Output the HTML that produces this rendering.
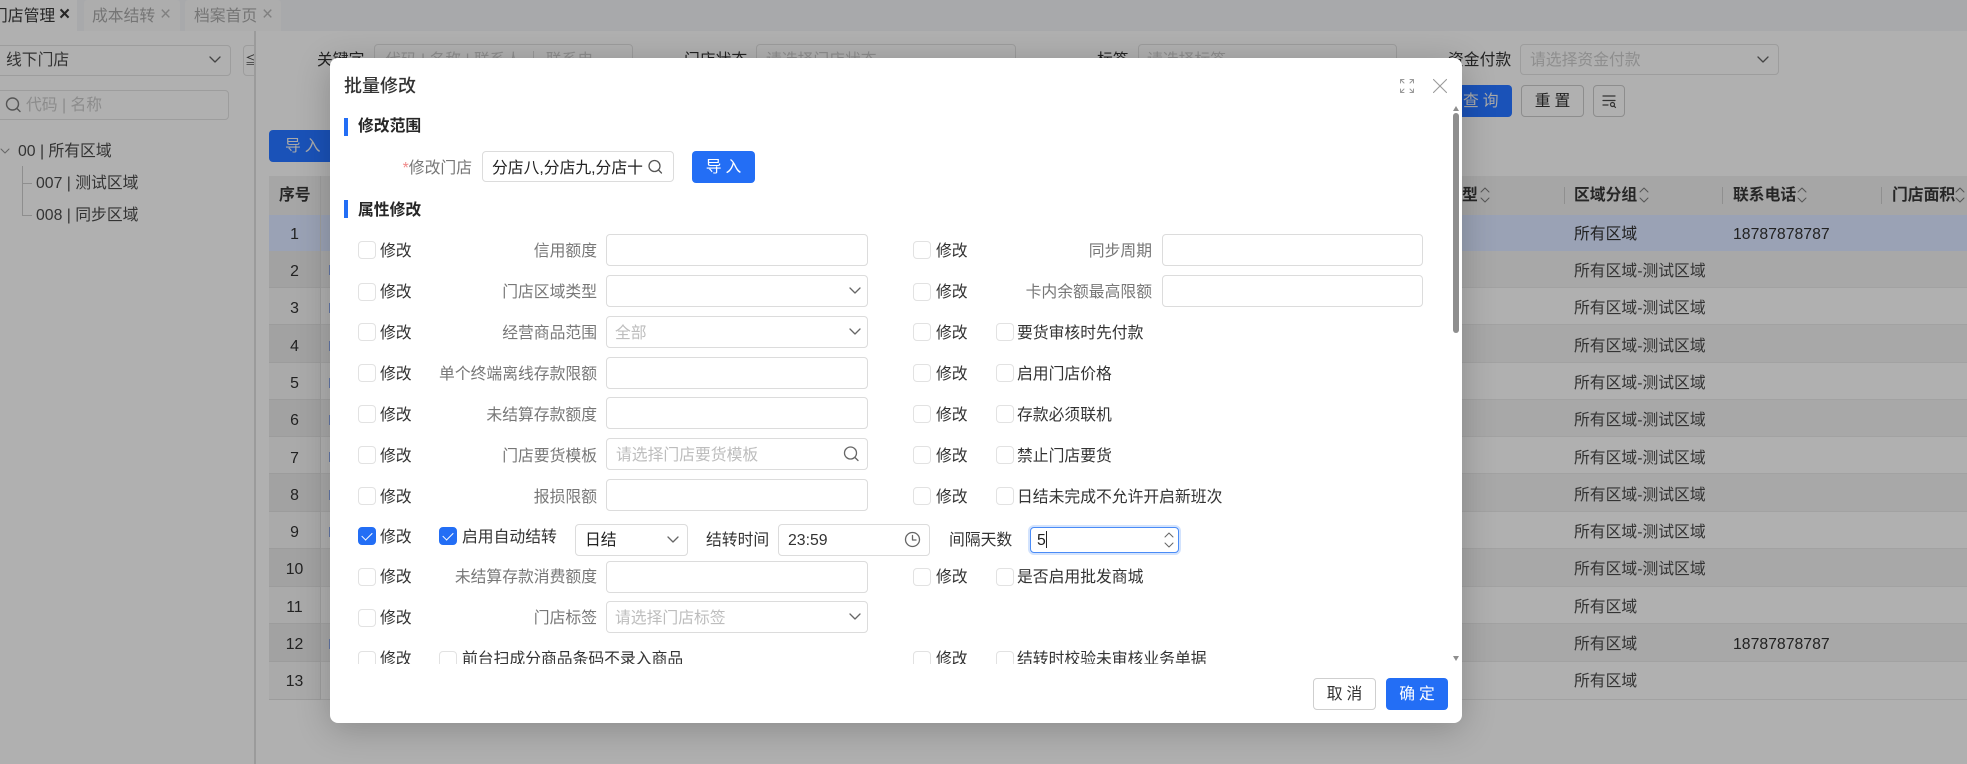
<!DOCTYPE html>
<html lang="zh-CN"><head><meta charset="utf-8"><title>批量修改</title>
<style>
*{box-sizing:border-box}
html,body{margin:0;padding:0;width:1967px;height:764px;overflow:hidden}
body{position:relative;background:#b0b0b0;font-family:"Liberation Sans","Noto Sans CJK SC",sans-serif;font-size:15.8px;color:#222}
.a,.t,.r,.rw,.in,.cb,.btn,svg{position:absolute}
.t{line-height:22px;height:22px;white-space:nowrap}
.r{line-height:22px;height:22px;white-space:nowrap;text-align:right}
.rw{left:269px;width:1698px;border-bottom:1px solid #a2a2a2}
.dk{background:#a8a8a8}
.in{background:#fff;border:1px solid #dcdcdc;border-radius:4px;height:32px}
.bgin{position:absolute;border:1px solid #9d9d9d;border-radius:4px;background:#b0b0b0}
.cb{width:18px;height:18px;border:1px solid #e2e2e2;border-radius:4px;background:#fff}
.cb.on{background:#236ef5;border-color:#236ef5}
.cb.on:after{content:"";position:absolute;left:5px;top:2px;width:5px;height:9px;border:solid #fff;border-width:0 1.6px 1.6px 0;transform:rotate(45deg)}
.btn{border-radius:4px;text-align:center;line-height:33px;height:32px;letter-spacing:4px;text-indent:4px}
.g{color:#777}.d{color:#333}.p{color:#bdbdbd}.h{font-weight:700;color:#262626}
.bd .d,.bd .g,.bd .p{transform:translateY(1px)}
.bd .n{transform:none}
.f{fill:none;stroke-linecap:round;stroke-linejoin:round}
.m{position:absolute;left:330px;top:58px;width:1132px;height:665px;background:#fff;border-radius:8px;box-shadow:0 6px 34px rgba(0,0,0,.22);overflow:hidden}
.bd{position:absolute;left:0;top:0;width:1120px;height:606px;overflow:hidden}
.sep{position:absolute;top:187px;height:17px;width:1px;background:#8f8f8f}
.pk{position:absolute;left:329px;width:2px;height:10px;background:#6478a8}
.x{font-size:19px}
</style></head><body>

<!-- tab bar -->
<div class="a" style="left:0;top:0;width:1967px;height:31px;background:#a8a9ab"></div>
<div class="a" style="left:0;top:0;width:77px;height:31px;background:#b0b0b0"></div>
<div class="t" style="left:-8px;top:6px;color:#262626">门店管理</div>
<div class="t x" style="left:59px;top:4px;color:#262626;font-weight:700">×</div>
<div class="a" style="left:84px;top:0;width:96px;height:31px;background:#adadad;border-radius:3px 3px 0 0"></div>
<div class="t" style="left:92px;top:6px;color:#757575">成本结转</div>
<div class="t x" style="left:160px;top:4px;color:#808080">×</div>
<div class="a" style="left:185px;top:0;width:96px;height:31px;background:#adadad;border-radius:3px 3px 0 0"></div>
<div class="t" style="left:194px;top:6px;color:#757575">档案首页</div>
<div class="t x" style="left:262px;top:4px;color:#808080">×</div>

<!-- left panel -->
<div class="bgin" style="left:-4px;top:45px;width:235px;height:31px"></div>
<div class="t d" style="left:6px;top:50px">线下门店</div>
<svg class="f" style="left:208px;top:55px" width="14" height="10" viewBox="0 0 14 10"><path d="M2 2l5 5 5-5" stroke="#444" stroke-width="1.3"/></svg>
<div class="bgin" style="left:243px;top:45px;width:20px;height:31px;border-radius:4px 0 0 4px"></div>
<div class="t" style="left:245px;top:49px;font-size:12px;color:#333">≦</div>
<div class="a" style="left:254px;top:31px;width:2px;height:733px;background:#9b9b9b"></div>
<div class="a" style="left:256px;top:45px;width:20px;height:31px;background:#b0b0b0"></div>
<div class="bgin" style="left:-4px;top:90px;width:233px;height:30px"></div>
<svg class="f" style="left:4px;top:96px" width="18" height="18" viewBox="0 0 18 18"><circle cx="8.5" cy="8" r="6" stroke="#555" stroke-width="1.4"/><path d="M13 12.5l3 3" stroke="#555" stroke-width="1.4"/></svg>
<div class="t" style="left:26px;top:95px;color:#8c8c8c">代码 | 名称</div>
<svg class="f" style="left:0;top:146px" width="10" height="10" viewBox="0 0 10 10"><path d="M1 3l4 4 4-4" stroke="#666" stroke-width="1"/></svg>
<div class="t d" style="left:18px;top:141px">00 | 所有区域</div>
<div class="a" style="left:22px;top:166px;width:1px;height:49px;background:#8e8e8e"></div>
<div class="a" style="left:22px;top:183px;width:10px;height:1px;background:#8e8e8e"></div>
<div class="a" style="left:22px;top:215px;width:10px;height:1px;background:#8e8e8e"></div>
<div class="t d" style="left:36px;top:173px">007 | 测试区域</div>
<div class="t d" style="left:36px;top:205px">008 | 同步区域</div>

<!-- filters -->
<div class="t" style="left:317px;top:50px;color:#222">关键字</div>
<div class="bgin" style="left:374px;top:44px;width:259px;height:31px"></div>
<div class="t" style="left:385px;top:50px;color:#8e8e8e">代码 | 名称 | 联系人 ｜ 联系电</div>
<div class="t" style="left:684px;top:50px;color:#222">门店状态</div>
<div class="bgin" style="left:756px;top:44px;width:260px;height:31px"></div>
<div class="t" style="left:766px;top:50px;color:#8e8e8e">请选择门店状态</div>
<div class="t" style="left:1097px;top:50px;color:#222">标签</div>
<div class="bgin" style="left:1138px;top:44px;width:259px;height:31px"></div>
<div class="t" style="left:1147px;top:50px;color:#8e8e8e">请选择标签</div>
<div class="t" style="left:1448px;top:50px;color:#222">资金付款</div>
<div class="bgin" style="left:1520px;top:44px;width:259px;height:31px"></div>
<div class="t" style="left:1530px;top:50px;color:#8e8e8e">请选择资金付款</div>
<svg class="f" style="left:1756px;top:55px" width="14" height="10" viewBox="0 0 14 10"><path d="M2 2l5 5 5-5" stroke="#444" stroke-width="1.3"/></svg>
<div class="btn" style="left:1440px;top:85px;width:72px;background:#1a52b8;color:#a9a9a9;text-align:left;text-indent:0;padding-left:23px;line-height:34px">查询</div>
<div class="btn" style="left:1521px;top:85px;width:63px;border:1px solid #8d8d8d;color:#222;line-height:32px">重置</div>
<div class="btn" style="left:1593px;top:85px;width:32px;border:1px solid #8d8d8d"></div>
<svg class="f" style="left:1601px;top:93px" width="16" height="16" viewBox="0 0 16 16"><path d="M2 3h12M2 7.500h12M2 12h5" stroke="#333" stroke-width="1.200"/><circle cx="11.500" cy="11.500" r="2" stroke="#333" stroke-width="1.200"/><path d="M13 13l1.500 1.500" stroke="#333" stroke-width="1.200"/></svg>
<div class="btn" style="left:269px;top:130px;width:70px;background:#1a52b8;color:#a9a9a9;text-align:left;text-indent:0;padding-left:16px;line-height:34px">导入</div>

<!-- table -->
<div class="a" style="left:269px;top:176px;width:1698px;height:39px;background:#a6a6a6"></div>
<div class="t h" style="left:279px;top:185px">序号</div>
<div class="rw" style="top:215px;height:36px;background:#9aa2b5;border:0"></div>
<div class="rw dk" style="top:251px;height:37px"></div>
<div class="rw" style="top:288px;height:37px"></div>
<div class="rw dk" style="top:325px;height:38px"></div>
<div class="rw" style="top:363px;height:37px"></div>
<div class="rw dk" style="top:400px;height:37px"></div>
<div class="rw" style="top:437px;height:37px"></div>
<div class="rw dk" style="top:474px;height:38px"></div>
<div class="rw" style="top:512px;height:37px"></div>
<div class="rw dk" style="top:549px;height:38px"></div>
<div class="rw" style="top:587px;height:37px"></div>
<div class="rw dk" style="top:624px;height:38px"></div>
<div class="rw" style="top:662px;height:38px"></div>
<div class="a" style="left:269px;top:251px;width:51px;height:449px;background:rgba(0,0,0,.03)"></div>
<div class="a" style="left:320px;top:176px;width:1px;height:524px;background:#9d9d9d"></div>
<div class="pk" style="top:265px"></div><div class="pk" style="top:303px"></div><div class="pk" style="top:341px"></div><div class="pk" style="top:378px"></div><div class="pk" style="top:415px"></div><div class="pk" style="top:452px"></div><div class="pk" style="top:490px"></div><div class="pk" style="top:527px"></div><div class="pk" style="top:639px"></div>

<div class="t" style="left:269px;width:51px;text-align:center;top:224px">1</div>
<div class="t" style="left:269px;width:51px;text-align:center;top:261px">2</div>
<div class="t" style="left:269px;width:51px;text-align:center;top:298px">3</div>
<div class="t" style="left:269px;width:51px;text-align:center;top:336px">4</div>
<div class="t" style="left:269px;width:51px;text-align:center;top:373px">5</div>
<div class="t" style="left:269px;width:51px;text-align:center;top:410px">6</div>
<div class="t" style="left:269px;width:51px;text-align:center;top:448px">7</div>
<div class="t" style="left:269px;width:51px;text-align:center;top:485px">8</div>
<div class="t" style="left:269px;width:51px;text-align:center;top:522px">9</div>
<div class="t" style="left:269px;width:51px;text-align:center;top:559px">10</div>
<div class="t" style="left:269px;width:51px;text-align:center;top:597px">11</div>
<div class="t" style="left:269px;width:51px;text-align:center;top:634px">12</div>
<div class="t" style="left:269px;width:51px;text-align:center;top:671px">13</div>

<div class="t h" style="left:1462px;top:185px">型</div>
<div class="sep" style="left:1564px"></div>
<div class="t h" style="left:1574px;top:185px">区域分组</div>
<div class="sep" style="left:1722px"></div>
<div class="t h" style="left:1733px;top:185px">联系电话</div>
<div class="sep" style="left:1881px"></div>
<div class="t h" style="left:1892px;top:185px">门店面积</div>
<svg class="f" style="left:1480px;top:186px" width="10" height="18" viewBox="0 0 10 18"><path d="M1 6l4-4 4 4M1 12l4 4 4-4" stroke="#555" stroke-width="1"/></svg>
<svg class="f" style="left:1639px;top:186px" width="10" height="18" viewBox="0 0 10 18"><path d="M1 6l4-4 4 4M1 12l4 4 4-4" stroke="#555" stroke-width="1"/></svg>
<svg class="f" style="left:1797px;top:186px" width="10" height="18" viewBox="0 0 10 18"><path d="M1 6l4-4 4 4M1 12l4 4 4-4" stroke="#555" stroke-width="1"/></svg>
<svg class="f" style="left:1955px;top:186px" width="10" height="18" viewBox="0 0 10 18"><path d="M1 6l4-4 4 4M1 12l4 4 4-4" stroke="#555" stroke-width="1"/></svg>

<div class="t" style="left:1574px;top:224px">所有区域</div>
<div class="t" style="left:1733px;top:224px">18787878787</div>
<div class="t d" style="left:1574px;top:261px">所有区域-测试区域</div>
<div class="t d" style="left:1574px;top:298px">所有区域-测试区域</div>
<div class="t d" style="left:1574px;top:336px">所有区域-测试区域</div>
<div class="t d" style="left:1574px;top:373px">所有区域-测试区域</div>
<div class="t d" style="left:1574px;top:410px">所有区域-测试区域</div>
<div class="t d" style="left:1574px;top:448px">所有区域-测试区域</div>
<div class="t d" style="left:1574px;top:485px">所有区域-测试区域</div>
<div class="t d" style="left:1574px;top:522px">所有区域-测试区域</div>
<div class="t d" style="left:1574px;top:559px">所有区域-测试区域</div>
<div class="t d" style="left:1574px;top:597px">所有区域</div>
<div class="t d" style="left:1574px;top:634px">所有区域</div>
<div class="t" style="left:1733px;top:634px">18787878787</div>
<div class="t d" style="left:1574px;top:671px">所有区域</div>

<!-- modal -->
<div class="m">
<div class="t" style="left:14px;top:17px;font-size:18px;font-weight:500;color:#333">批量修改</div>
<svg class="f" style="left:1069px;top:20px" width="16" height="16" viewBox="0 0 16 16"><path d="M1.500 5V1.500H5M11 1.500h3.500V5M14.500 11v3.500H11M5 14.500H1.500V11M2 2l3 3M14 2l-3 3M14 14l-3-3M2 14l3-3" stroke="#9a9a9a" stroke-width="1"/></svg>
<svg class="f" style="left:1102px;top:20px" width="16" height="16" viewBox="0 0 16 16"><path d="M1.500 1.500l13 13M14.500 1.500l-13 13" stroke="#9a9a9a" stroke-width="1.100"/></svg>

<div class="bd">
<div class="a" style="left:14px;top:60px;width:4px;height:18px;background:#236ef5"></div>
<div class="t h" style="left:28px;top:58px">修改范围</div>
<div class="r g n" style="left:50px;width:92px;top:100px"><span style="color:#f08a8a">*</span>修改门店</div>
<div class="in" style="left:152px;top:93px;width:192px;height:31px"></div>
<div class="t" style="left:162px;top:100px;color:#222">分店八,分店九,分店十</div>
<svg class="f" style="left:316px;top:100px" width="18" height="18" viewBox="0 0 18 18"><circle cx="8.500" cy="8" r="5.500" stroke="#555" stroke-width="1.300"/><path d="M12.500 12l3 3" stroke="#555" stroke-width="1.300"/></svg>
<div class="btn" style="left:362px;top:93px;width:63px;background:#236ef5;color:#fff">导入</div>
<div class="a" style="left:14px;top:142px;width:4px;height:18px;background:#236ef5"></div>
<div class="t h" style="left:28px;top:142px">属性修改</div>

<!-- row 1 -->
<div class="cb" style="left:28px;top:183px"></div><div class="t d" style="left:50px;top:182px">修改</div>
<div class="r g" style="left:67px;width:200px;top:182px">信用额度</div>
<div class="in" style="left:276px;top:176px;width:262px"></div>
<div class="cb" style="left:583px;top:183px"></div><div class="t d" style="left:606px;top:182px">修改</div>
<div class="r g" style="left:622px;width:200px;top:182px">同步周期</div>
<div class="in" style="left:832px;top:176px;width:261px"></div>

<!-- row 2 -->
<div class="cb" style="left:28px;top:225px"></div><div class="t d" style="left:50px;top:223px">修改</div>
<div class="r g" style="left:67px;width:200px;top:223px">门店区域类型</div>
<div class="in" style="left:276px;top:217px;width:262px"></div>
<svg class="f" style="left:518px;top:228px" width="14" height="10" viewBox="0 0 14 10"><path d="M2 2l5 5 5-5" stroke="#666" stroke-width="1.300"/></svg>
<div class="cb" style="left:583px;top:225px"></div><div class="t d" style="left:606px;top:223px">修改</div>
<div class="r g" style="left:622px;width:200px;top:223px">卡内余额最高限额</div>
<div class="in" style="left:832px;top:217px;width:261px"></div>

<!-- row 3 -->
<div class="cb" style="left:28px;top:265px"></div><div class="t d" style="left:50px;top:264px">修改</div>
<div class="r g" style="left:67px;width:200px;top:264px">经营商品范围</div>
<div class="in" style="left:276px;top:258px;width:262px"></div>
<div class="t p" style="left:285px;top:264px">全部</div>
<svg class="f" style="left:518px;top:269px" width="14" height="10" viewBox="0 0 14 10"><path d="M2 2l5 5 5-5" stroke="#666" stroke-width="1.300"/></svg>
<div class="cb" style="left:583px;top:265px"></div><div class="t d" style="left:606px;top:264px">修改</div>
<div class="cb" style="left:666px;top:265px"></div><div class="t d" style="left:687px;top:264px">要货审核时先付款</div>

<!-- row 4 -->
<div class="cb" style="left:28px;top:306px"></div><div class="t d" style="left:50px;top:305px">修改</div>
<div class="r g" style="left:67px;width:200px;top:305px">单个终端离线存款限额</div>
<div class="in" style="left:276px;top:299px;width:262px"></div>
<div class="cb" style="left:583px;top:306px"></div><div class="t d" style="left:606px;top:305px">修改</div>
<div class="cb" style="left:666px;top:306px"></div><div class="t d" style="left:687px;top:305px">启用门店价格</div>

<!-- row 5 -->
<div class="cb" style="left:28px;top:347px"></div><div class="t d" style="left:50px;top:346px">修改</div>
<div class="r g" style="left:67px;width:200px;top:346px">未结算存款额度</div>
<div class="in" style="left:276px;top:339px;width:262px"></div>
<div class="cb" style="left:583px;top:347px"></div><div class="t d" style="left:606px;top:346px">修改</div>
<div class="cb" style="left:666px;top:347px"></div><div class="t d" style="left:687px;top:346px">存款必须联机</div>

<!-- row 6 -->
<div class="cb" style="left:28px;top:388px"></div><div class="t d" style="left:50px;top:387px">修改</div>
<div class="r g" style="left:67px;width:200px;top:387px">门店要货模板</div>
<div class="in" style="left:276px;top:380px;width:262px"></div>
<div class="t p n" style="left:286px;top:387px">请选择门店要货模板</div>
<svg class="f" style="left:511px;top:386px" width="20" height="20" viewBox="0 0 20 20"><circle cx="9.500" cy="9" r="6" stroke="#666" stroke-width="1.300"/><path d="M14 13.500l3 3" stroke="#666" stroke-width="1.300"/></svg>
<div class="cb" style="left:583px;top:388px"></div><div class="t d" style="left:606px;top:387px">修改</div>
<div class="cb" style="left:666px;top:388px"></div><div class="t d" style="left:687px;top:387px">禁止门店要货</div>

<!-- row 7 -->
<div class="cb" style="left:28px;top:429px"></div><div class="t d" style="left:50px;top:428px">修改</div>
<div class="r g" style="left:67px;width:200px;top:428px">报损限额</div>
<div class="in" style="left:276px;top:421px;width:262px"></div>
<div class="cb" style="left:583px;top:429px"></div><div class="t d" style="left:606px;top:428px">修改</div>
<div class="cb" style="left:666px;top:429px"></div><div class="t d" style="left:687px;top:428px">日结未完成不允许开启新班次</div>

<!-- row 8 -->
<div class="cb on" style="left:28px;top:469px"></div><div class="t d" style="left:50px;top:468px">修改</div>
<div class="cb on" style="left:109px;top:469px"></div><div class="t d" style="left:132px;top:468px">启用自动结转</div>
<div class="in" style="left:245px;top:466px;width:113px"></div>
<div class="t" style="left:255px;top:472px;color:#222">日结</div>
<svg class="f" style="left:336px;top:477px" width="14" height="10" viewBox="0 0 14 10"><path d="M2 2l5 5 5-5" stroke="#666" stroke-width="1.300"/></svg>
<div class="t d n" style="left:376px;top:472px">结转时间</div>
<div class="in" style="left:448px;top:466px;width:152px"></div>
<div class="t d n" style="left:458px;top:472px">23:59</div>
<svg class="f" style="left:574px;top:473px" width="17" height="17" viewBox="0 0 17 17"><circle cx="8.500" cy="8.500" r="7" stroke="#666" stroke-width="1.300"/><path d="M8.500 4.500v4.500h3.500" stroke="#666" stroke-width="1.300"/></svg>
<div class="t d n" style="left:619px;top:472px">间隔天数</div>
<div class="in" style="left:700px;top:469px;width:149px;height:26px;border-color:#4a8cf7;box-shadow:0 0 0 2px #d3e3fd"></div>
<div class="t" style="left:707px;top:472px;color:#222">5</div>
<div class="a" style="left:716px;top:473px;width:1px;height:17px;background:#222"></div>
<svg class="f" style="left:834px;top:473px" width="10" height="18" viewBox="0 0 10 18"><path d="M1 6l4-4 4 4M1 12l4 4 4-4" stroke="#666" stroke-width="1"/></svg>

<!-- row 9 -->
<div class="cb" style="left:28px;top:510px"></div><div class="t d" style="left:50px;top:508px">修改</div>
<div class="r g" style="left:67px;width:200px;top:508px">未结算存款消费额度</div>
<div class="in" style="left:276px;top:503px;width:262px"></div>
<div class="cb" style="left:583px;top:510px"></div><div class="t d" style="left:606px;top:508px">修改</div>
<div class="cb" style="left:666px;top:510px"></div><div class="t d" style="left:687px;top:508px">是否启用批发商城</div>

<!-- row 10 -->
<div class="cb" style="left:28px;top:551px"></div><div class="t d" style="left:50px;top:549px">修改</div>
<div class="r g" style="left:67px;width:200px;top:549px">门店标签</div>
<div class="in" style="left:276px;top:543px;width:262px"></div>
<div class="t p" style="left:285px;top:549px">请选择门店标签</div>
<svg class="f" style="left:518px;top:554px" width="14" height="10" viewBox="0 0 14 10"><path d="M2 2l5 5 5-5" stroke="#666" stroke-width="1.300"/></svg>

<!-- row 11 -->
<div class="cb" style="left:28px;top:593px"></div><div class="t d n" style="left:50px;top:591px">修改</div>
<div class="cb" style="left:109px;top:593px"></div><div class="t d n" style="left:132px;top:591px">前台扫成分商品条码不录入商品</div>
<div class="cb" style="left:583px;top:593px"></div><div class="t d n" style="left:606px;top:591px">修改</div>
<div class="cb" style="left:666px;top:593px"></div><div class="t d n" style="left:687px;top:591px">结转时校验未审核业务单据</div>
</div>

<!-- scrollbar -->
<div class="a" style="left:1123px;top:48px;width:0;height:0;border:3px solid transparent;border-bottom:5px solid #8e8e8e;border-top:0"></div>
<div class="a" style="left:1123px;top:55px;width:6px;height:220px;background:#8e8e8e;border-radius:3px"></div>
<div class="a" style="left:1123px;top:598px;width:0;height:0;border:3px solid transparent;border-top:5px solid #8e8e8e;border-bottom:0"></div>

<div class="btn" style="left:983px;top:620px;width:63px;border:1px solid #cfcfcf;color:#333;line-height:31px">取消</div>
<div class="btn" style="left:1056px;top:620px;width:62px;background:#236ef5;color:#fff">确定</div>
</div>
</body></html>
